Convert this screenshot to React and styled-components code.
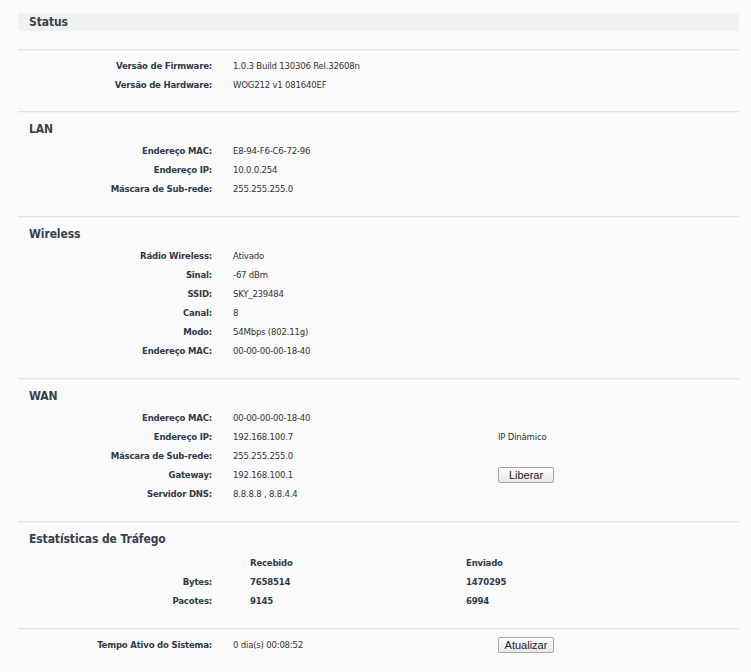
import React from 'react';
import styled, { createGlobalStyle } from 'styled-components';

const GlobalStyle = createGlobalStyle`
  html, body {
    margin: 0;
    padding: 0;
    background: #fafafa;
  }
  body {
    font-family: "DejaVu Sans Condensed", "DejaVu Sans", sans-serif;
    font-stretch: condensed;
    font-size: 9.5px;
    letter-spacing: -0.2px;
    color: #333;
  }
  *, *::before, *::after {
    box-sizing: border-box;
  }
`;

const Page = styled.div`
  width: 739px;
  padding: 13px 0 20px 18px;
`;

const HeaderBar = styled.div`
  height: 18px;
  line-height: 18px;
  background: #f0f1f1;
  padding-left: 11px;
  font-size: 12px;
  letter-spacing: -0.1px;
  font-weight: bold;
  color: #36424f;
  margin-bottom: 18px;
`;

const Section = styled.section`
  border-top: 1px solid #e2e2e2;
  box-shadow: inset 0 1px 0 #f2f2f2;
  padding: ${(p) => p.$pad || '8px 0 19px'};
`;

const SectionTitle = styled.h2`
  margin: 0 0 ${(p) => p.$gap || '2px'};
  padding: 1px 0 0 11px;
  height: 18px;
  line-height: 17px;
  font-size: 12px;
  letter-spacing: -0.1px;
  font-weight: bold;
  color: #36424f;
`;

const Row = styled.div`
  display: grid;
  grid-template-columns: ${(p) => p.$cols || '194px 244px auto'};
  column-gap: ${(p) => p.$gap || '21px'};
  height: 19px;
  padding-top: 2px;
  align-items: center;
`;

const Label = styled.div`
  text-align: right;
  font-weight: bold;
  color: #2e3a48;
  white-space: nowrap;
`;

const Value = styled.div`
  white-space: nowrap;
  color: #333;
  font-weight: ${(p) => (p.$bold ? 'bold' : 'normal')};
  ${(p) => p.$bold && 'color: #2e3a48;'}
`;

const Button = styled.button`
  display: block;
  width: 56px;
  height: 16px;
  padding: 0;
  font-family: "Liberation Sans", Arial, sans-serif;
  font-size: 11px;
  letter-spacing: 0;
  color: #222;
  background: linear-gradient(#fdfdfd, #e8e8e8);
  border: 1px solid #a5a5a5;
  border-radius: 2px;
  line-height: 14px;
`;

const InfoRow = ({ label, value, extra }) => (
  <Row>
    <Label>{label}</Label>
    <Value>{value}</Value>
    <div>{extra}</div>
  </Row>
);

const statCols = '194px 178px auto';

const StatRow = ({ label, rx, tx }) => (
  <Row $cols={statCols} $gap="38px">
    <Label>{label}</Label>
    <Value $bold>{rx}</Value>
    <Value $bold>{tx}</Value>
  </Row>
);

export default function App() {
  return (
    <Page>
      <GlobalStyle />
      <HeaderBar>Status</HeaderBar>

      <Section $pad="5px 0 18px">
        <InfoRow label="Versão de Firmware:" value="1.0.3 Build 130306 Rel.32608n" />
        <InfoRow label="Versão de Hardware:" value="WOG212 v1 081640EF" />
      </Section>

      <Section>
        <SectionTitle>LAN</SectionTitle>
        <InfoRow label="Endereço MAC:" value="E8-94-F6-C6-72-96" />
        <InfoRow label="Endereço IP:" value="10.0.0.254" />
        <InfoRow label="Máscara de Sub-rede:" value="255.255.255.0" />
      </Section>

      <Section>
        <SectionTitle>Wireless</SectionTitle>
        <InfoRow label="Rádio Wireless:" value="Ativado" />
        <InfoRow label="Sinal:" value="-67 dBm" />
        <InfoRow label="SSID:" value="SKY_239484" />
        <InfoRow label="Canal:" value="8" />
        <InfoRow label="Modo:" value="54Mbps (802.11g)" />
        <InfoRow label="Endereço MAC:" value="00-00-00-00-18-40" />
      </Section>

      <Section>
        <SectionTitle>WAN</SectionTitle>
        <InfoRow label="Endereço MAC:" value="00-00-00-00-18-40" />
        <InfoRow label="Endereço IP:" value="192.168.100.7" extra="IP Dinâmico" />
        <InfoRow label="Máscara de Sub-rede:" value="255.255.255.0" />
        <InfoRow label="Gateway:" value="192.168.100.1" extra={<Button>Liberar</Button>} />
        <InfoRow label="Servidor DNS:" value="8.8.8.8 , 8.8.4.4" />
      </Section>

      <Section>
        <SectionTitle $gap="4px">Estatísticas de Tráfego</SectionTitle>
        <StatRow label="" rx="Recebido" tx="Enviado" />
        <StatRow label="Bytes:" rx="7658514" tx="1470295" />
        <StatRow label="Pacotes:" rx="9145" tx="6994" />
      </Section>

      <Section $pad="5px 0 19px">
        <InfoRow label="Tempo Ativo do Sistema:" value="0 dia(s) 00:08:52" extra={<Button>Atualizar</Button>} />
      </Section>
    </Page>
  );
}
